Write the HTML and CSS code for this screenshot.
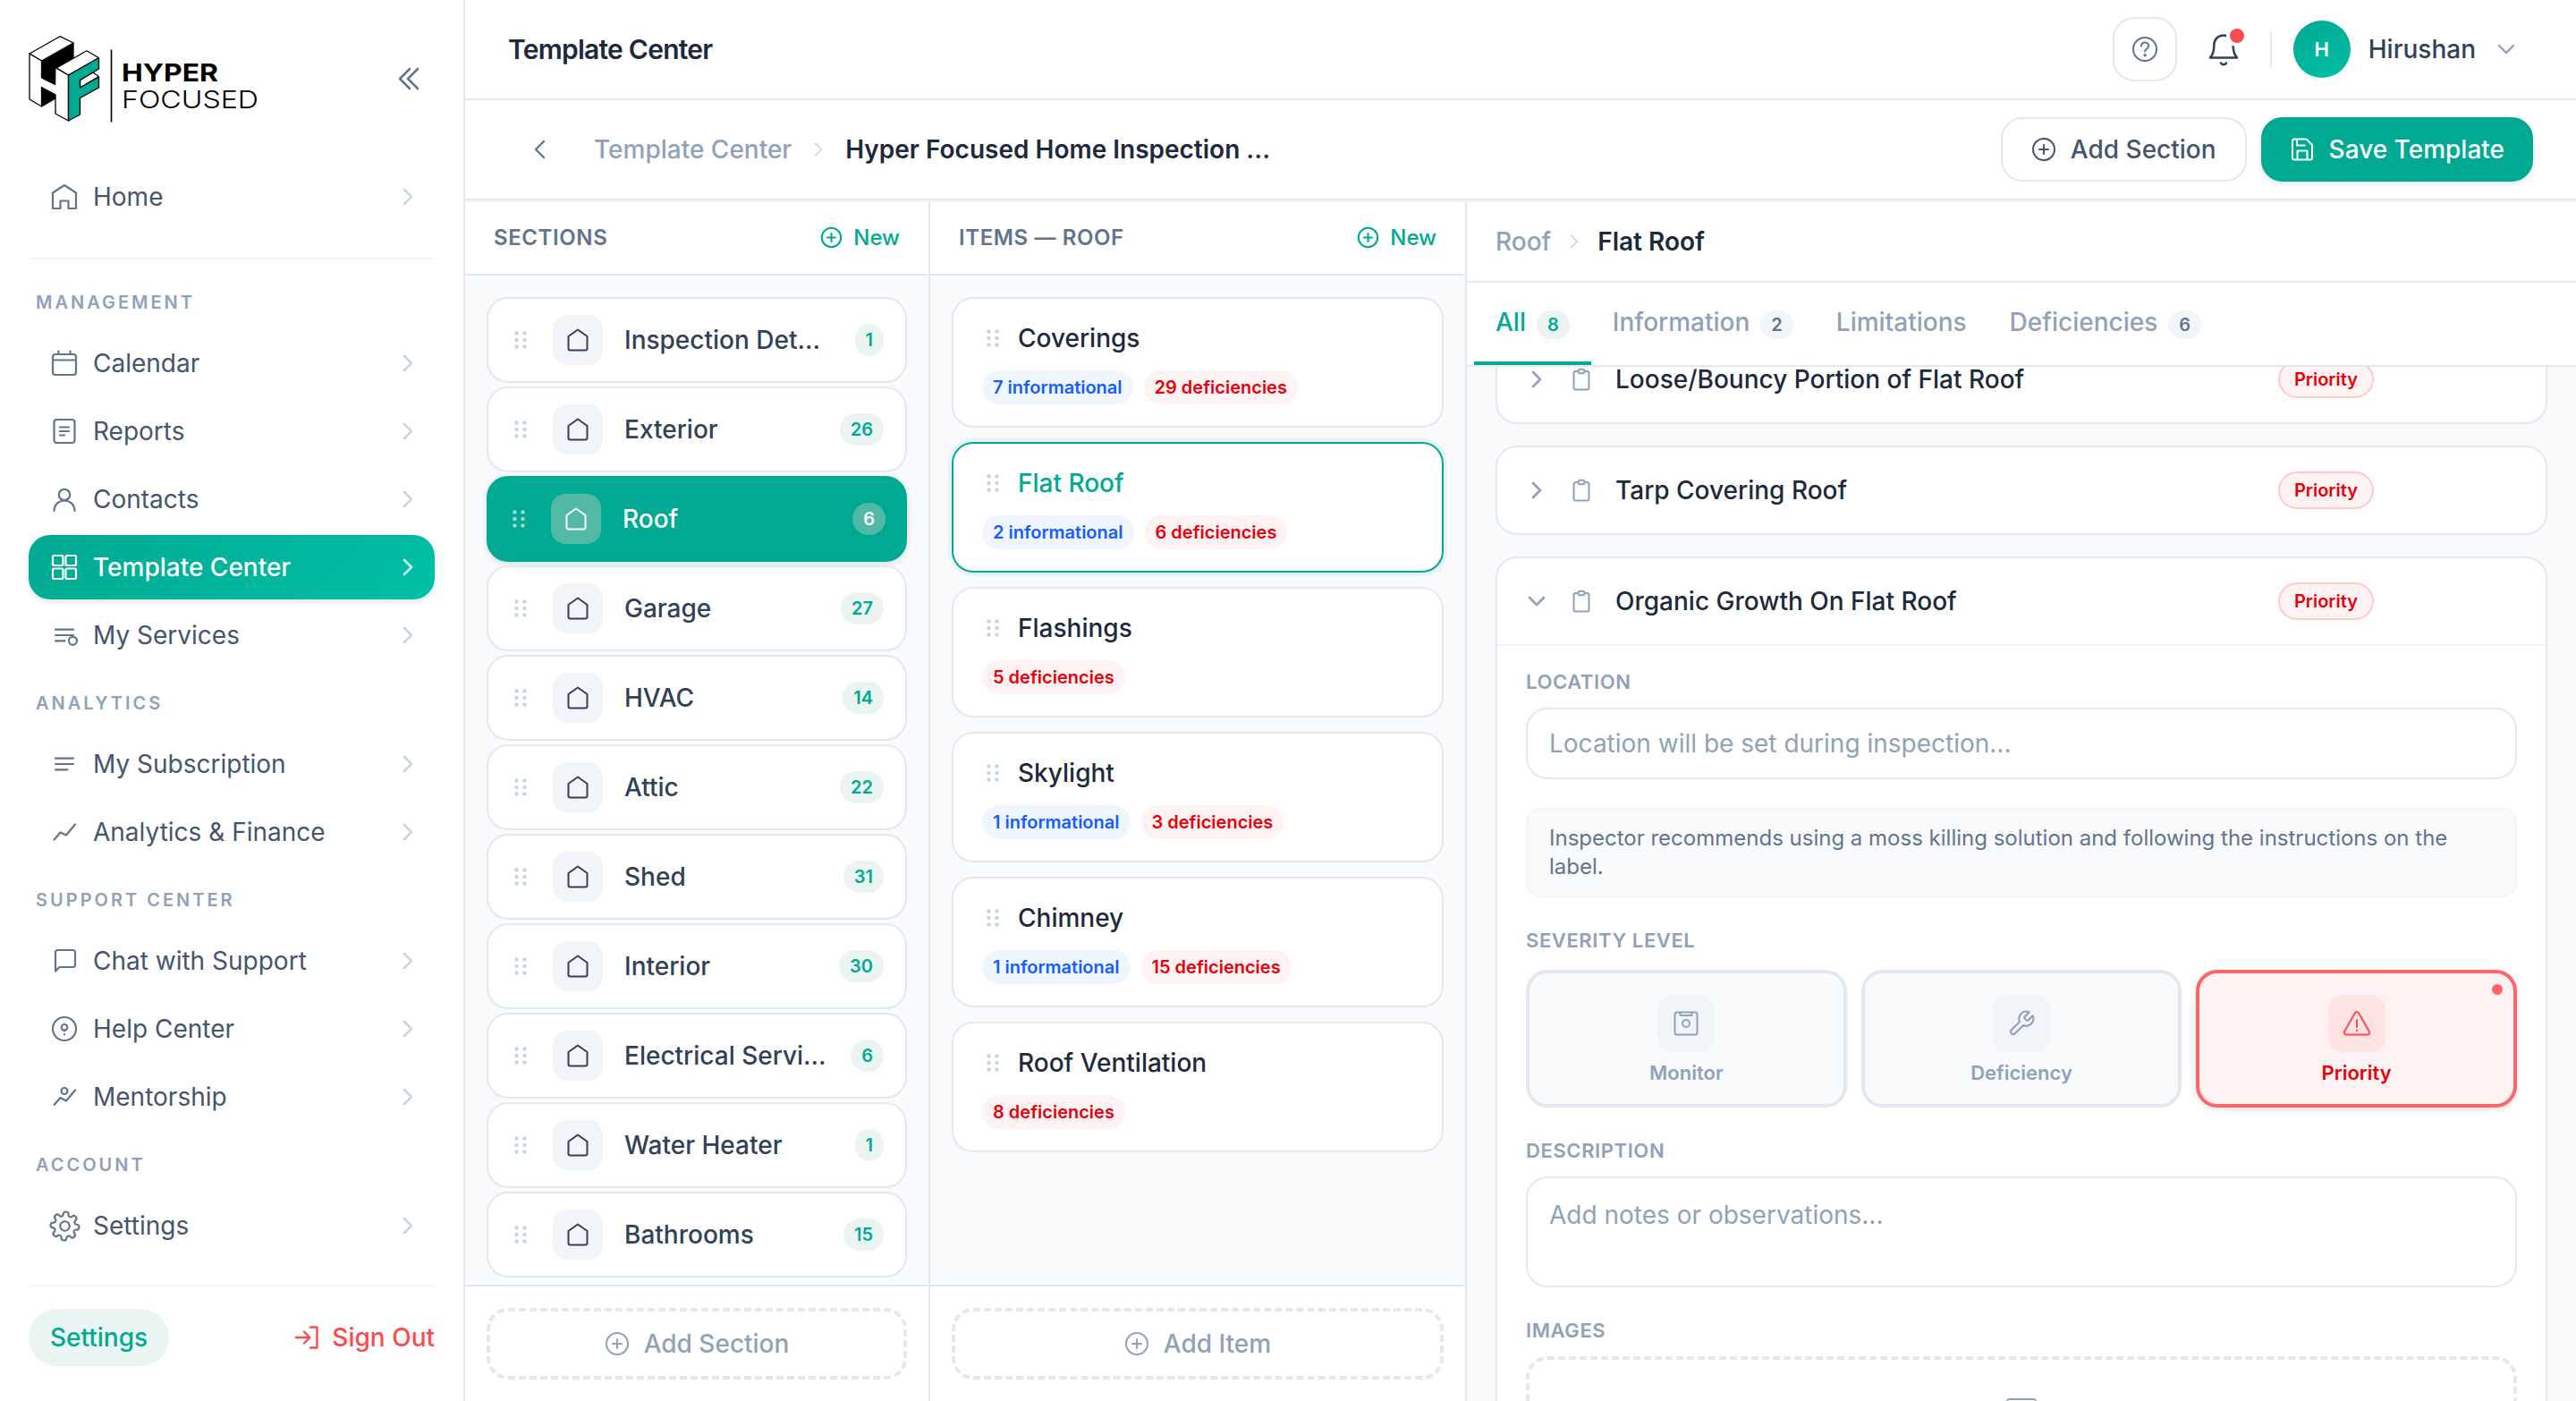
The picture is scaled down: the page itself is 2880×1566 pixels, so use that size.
FILE: index.html
```html
<!DOCTYPE html>
<html lang="en">
<head>
    <meta charset="UTF-8">
    <meta name="viewport" content="width=device-width, initial-scale=1.0">
    <title>Template Center</title>
    <link rel="stylesheet" href="styles.css">
</head>
<body>
    <!-- Icon sprite -->
    <svg class="sprite">
        <symbol id="i-right" viewBox="0 0 24 24"><path d="M8 4l8 8-8 8"/></symbol>
        <symbol id="i-down" viewBox="0 0 24 24"><path d="M4 8l8 8 8-8"/></symbol>
        <symbol id="i-left" viewBox="0 0 24 24"><path d="M16 3l-9 9 9 9"/></symbol>
        <symbol id="i-grip" viewBox="0 0 24 24"><g fill="currentColor" stroke="none"><circle cx="7.5" cy="4.5" r="2.3"/><circle cx="16.5" cy="4.5" r="2.3"/><circle cx="7.5" cy="12" r="2.3"/><circle cx="16.5" cy="12" r="2.3"/><circle cx="7.5" cy="19.5" r="2.3"/><circle cx="16.5" cy="19.5" r="2.3"/></g></symbol>
        <symbol id="i-house" viewBox="0 0 28 28"><path d="M14 2.5L3.5 10v13.500a2 2 0 0 0 2 2h17a2 2 0 0 0 2-2V10z"/></symbol>
        <symbol id="i-plus" viewBox="0 0 28 28"><circle cx="14" cy="14" r="12"/><path d="M14 9v10M9 14h10"/></symbol>
        <symbol id="i-clip" viewBox="0 0 24 28"><rect x="3.500" y="5" width="17" height="20.500" rx="2.500"/><rect x="8.500" y="2.800" width="7" height="4.500" rx="2.200" fill="#fff"/></symbol>
        <symbol id="i-home" viewBox="0 0 32 32"><path d="M16 3L3 11.500V29h8.500v-8.500h9V29H29V11.500z"/></symbol>
        <symbol id="i-calendar" viewBox="0 0 32 32"><rect x="3" y="6" width="26" height="23" rx="3"/><path d="M3 12.500h26M9.500 2.500V6M22.500 2.500V6"/></symbol>
        <symbol id="i-report" viewBox="0 0 32 32"><rect x="4.500" y="3" width="23" height="26" rx="3"/><path d="M11 11.500h10M11 16h10M11 20.500h5"/></symbol>
        <symbol id="i-user" viewBox="0 0 32 32"><circle cx="16" cy="11" r="6.200"/><path d="M4.500 29c0-6.500 5-11.500 11.500-11.500S27.500 22.500 27.500 29"/></symbol>
        <symbol id="i-grid" viewBox="0 0 32 32"><rect x="3" y="3" width="11.500" height="11" rx="1.500"/><rect x="17.500" y="3" width="11.500" height="11" rx="1.500"/><rect x="3" y="17.500" width="11.500" height="11.500" rx="1.500"/><rect x="17.500" y="17.500" width="11.500" height="11.500" rx="1.500"/></symbol>
        <symbol id="i-services" viewBox="0 0 32 32"><path d="M6 9.700h20M6 16h20M6 22.300h10.500"/><circle cx="25.500" cy="22.300" r="4.500" fill="#fff"/></symbol>
        <symbol id="i-lines" viewBox="0 0 32 32"><path d="M6 9.700h20M6 16h20M6 22.300h13.500"/></symbol>
        <symbol id="i-trend" viewBox="0 0 32 32"><path d="M4.500 24.500l7-8 6.500 3 10-12"/></symbol>
        <symbol id="i-chat" viewBox="0 0 32 32"><path d="M6 27.500V6.500a2.500 2.500 0 0 1 2.500-2.500h17a2.500 2.500 0 0 1 2.500 2.500v14a2.500 2.500 0 0 1-2.500 2.500H10.500z"/></symbol>
        <symbol id="i-help" viewBox="0 0 32 32"><circle cx="16" cy="16" r="13"/><circle cx="16" cy="14.300" r="3.300"/><path d="M16 17.500v1M16 22v.3"/></symbol>
        <symbol id="i-mentor" viewBox="0 0 32 32"><path d="M4.500 25l7-8 6.500 3.500 10-12"/><circle cx="16" cy="9.500" r="3.500"/></symbol>
        <symbol id="i-gear" viewBox="0 0 24 24"><circle cx="12" cy="12" r="3.600"/><path d="M19.400 15a1.650 1.650 0 0 0 .33 1.820l.06.06a2 2 0 0 1-2.830 2.830l-.06-.06a1.650 1.650 0 0 0-1.820-.33 1.650 1.650 0 0 0-1 1.510V21a2 2 0 0 1-4 0v-.09A1.650 1.650 0 0 0 9 19.400a1.650 1.650 0 0 0-1.820.33l-.06.06a2 2 0 0 1-2.830-2.830l.06-.06a1.650 1.650 0 0 0 .33-1.820 1.650 1.650 0 0 0-1.510-1H3a2 2 0 0 1 0-4h.09A1.650 1.650 0 0 0 4.600 9a1.650 1.650 0 0 0-.33-1.820l-.06-.06a2 2 0 0 1 2.830-2.830l.06.06a1.650 1.650 0 0 0 1.820.33H9a1.650 1.650 0 0 0 1-1.510V3a2 2 0 0 1 4 0v.09a1.650 1.650 0 0 0 1 1.510 1.650 1.650 0 0 0 1.820-.33l.06-.06a2 2 0 0 1 2.830 2.830l-.06.06a1.650 1.650 0 0 0-.33 1.820V9a1.650 1.650 0 0 0 1.510 1H21a2 2 0 0 1 0 4h-.09a1.650 1.650 0 0 0-1.510 1z"/></symbol>
    </svg>

    <div class="app">
        <aside class="sidebar">
            <div class="brand">
                <svg class="logo" viewBox="32 40 256 96">
                    <g fill="#fff" stroke="#000" stroke-width="1.300" stroke-linejoin="round">
                        <path fill="#000" d="M46.500 68L82 48v16L63 76v19l-16.500-8z"/>
                        <path fill="#000" d="M46.500 97L62 106v4l-15.500 9z"/>
                        <path d="M33 60l34-19.300L82 48 46.500 68z"/>
                        <path d="M33 60l13.500 8v19L62 95.500V106l-15.500-9v22L33 111z"/>
                        <path stroke="none" d="M45.800 87.500L63.500 96v9.500L45.800 96.500z"/>
                        <path d="M63 76l34-19.300 13.500 8L76.500 84z"/>
                        <path d="M62.500 76l14 8v51L62 127v-21"/>
                        <path stroke="none" d="M60 95.500l4 2v8l-4-2z"/>
                        <path d="M104 81l6.500 4.500-21 12.500v-8.500z"/>
                        <path fill="#00a991" d="M76.500 84l34-19.500V77l-21 12.500V98l21-12v12l-21 11.500V128l-13 7z"/>
                    </g>
                    <path d="M124.500 56v80" stroke="#000" stroke-width="1.600"/>
                    <text class="logo-bold" x="136" y="91" textLength="108" lengthAdjust="spacingAndGlyphs">HYPER</text>
                    <text class="logo-thin" x="136" y="121" textLength="153" lengthAdjust="spacingAndGlyphs">FOCUSED</text>
                </svg>
                <svg class="ic collapse" viewBox="0 0 24 26"><path d="M13 2L2 13l11 11M22 2L11 13l11 11"/></svg>
            </div>

            <nav class="nav">
                <a class="nav-item"><svg class="ic"><use href="#i-home"/></svg><span>Home</span><svg class="chev"><use href="#i-right"/></svg></a>
                <hr class="nav-line">
                <h4 class="nav-title">Management</h4>
                <a class="nav-item"><svg class="ic"><use href="#i-calendar"/></svg><span>Calendar</span><svg class="chev"><use href="#i-right"/></svg></a>
                <a class="nav-item"><svg class="ic"><use href="#i-report"/></svg><span>Reports</span><svg class="chev"><use href="#i-right"/></svg></a>
                <a class="nav-item"><svg class="ic"><use href="#i-user"/></svg><span>Contacts</span><svg class="chev"><use href="#i-right"/></svg></a>
                <a class="nav-item active"><svg class="ic"><use href="#i-grid"/></svg><span>Template Center</span><svg class="chev"><use href="#i-right"/></svg></a>
                <a class="nav-item"><svg class="ic"><use href="#i-services"/></svg><span>My Services</span><svg class="chev"><use href="#i-right"/></svg></a>
                <h4 class="nav-title">Analytics</h4>
                <a class="nav-item"><svg class="ic"><use href="#i-lines"/></svg><span>My Subscription</span><svg class="chev"><use href="#i-right"/></svg></a>
                <a class="nav-item"><svg class="ic"><use href="#i-trend"/></svg><span>Analytics &amp; Finance</span><svg class="chev"><use href="#i-right"/></svg></a>
                <h4 class="nav-title">Support Center</h4>
                <a class="nav-item"><svg class="ic"><use href="#i-chat"/></svg><span>Chat with Support</span><svg class="chev"><use href="#i-right"/></svg></a>
                <a class="nav-item"><svg class="ic"><use href="#i-help"/></svg><span>Help Center</span><svg class="chev"><use href="#i-right"/></svg></a>
                <a class="nav-item"><svg class="ic"><use href="#i-mentor"/></svg><span>Mentorship</span><svg class="chev"><use href="#i-right"/></svg></a>
                <h4 class="nav-title">Account</h4>
                <a class="nav-item"><svg class="ic gear"><use href="#i-gear"/></svg><span>Settings</span><svg class="chev"><use href="#i-right"/></svg></a>
            </nav>

            <div class="side-footer">
                <a class="pill-link">Settings</a>
                <a class="sign-out"><svg class="ic" viewBox="0 0 28 28"><path d="M2 14h15M11 7.500l6.500 6.500-6.500 6.500M18 2.500h7.500v23H18"/></svg>Sign Out</a>
            </div>
        </aside>

        <div class="main">
            <header class="topbar">
                <h1>Template Center</h1>
                <div class="top-actions">
                    <button class="help-btn"><svg class="ic" viewBox="0 0 32 32"><circle cx="16" cy="16" r="13"/><path d="M11.800 12.500c.3-2.500 2-4 4.300-4s4.200 1.500 4.200 3.700c0 3.300-4.200 3.200-4.200 6.300"/><circle cx="16.100" cy="22.800" r="1.700" fill="currentColor" stroke="none"/></svg></button>
                    <div class="bell">
                        <svg class="ic" viewBox="0 0 36 40"><path d="M3 29.500c2.800-3 4.300-6.500 4.300-13.500C7.300 9 11.500 4.500 18 4.500S28.700 9 28.700 16c0 7 1.500 10.500 4.300 13.500zM15 35.500c1.500 2.300 4.500 2.300 6 0"/></svg>
                        <span class="bell-dot"></span>
                    </div>
                    <div class="user">
                        <span class="avatar">H</span>
                        <span class="user-name">Hirushan</span>
                        <svg class="ic user-chev"><use href="#i-down"/></svg>
                    </div>
                </div>
            </header>

            <div class="subbar">
                <svg class="ic back"><use href="#i-left"/></svg>
                <span class="crumb">Template Center</span>
                <svg class="ic crumb-sep"><use href="#i-right"/></svg>
                <span class="crumb-current">Hyper Focused Home Inspection ...</span>
                <div class="sub-actions">
                    <button class="btn"><svg class="ic"><use href="#i-plus"/></svg>Add Section</button>
                    <button class="btn btn-primary"><svg class="ic" viewBox="0 0 28 28"><path d="M5 2.500h13.500l6.500 6.500v14.500a2 2 0 0 1-2 2H5a2 2 0 0 1-2-2v-19a2 2 0 0 1 2-2zM8 3v6.500h9M8.500 25v-9.500h11V25"/></svg>Save Template</button>
                </div>
            </div>

            <div class="columns">
                <section class="col col-sections">
                    <div class="col-head"><h2>SECTIONS</h2><a class="new"><svg class="ic"><use href="#i-plus"/></svg>New</a></div>
                    <div class="col-list section-list">
                        <div class="section"><svg class="grip"><use href="#i-grip"/></svg><span class="house"><svg class="ic"><use href="#i-house"/></svg></span><span class="name">Inspection Det…</span><span class="count">1</span></div>
                        <div class="section"><svg class="grip"><use href="#i-grip"/></svg><span class="house"><svg class="ic"><use href="#i-house"/></svg></span><span class="name">Exterior</span><span class="count">26</span></div>
                        <div class="section active"><svg class="grip"><use href="#i-grip"/></svg><span class="house"><svg class="ic"><use href="#i-house"/></svg></span><span class="name">Roof</span><span class="count">6</span></div>
                        <div class="section"><svg class="grip"><use href="#i-grip"/></svg><span class="house"><svg class="ic"><use href="#i-house"/></svg></span><span class="name">Garage</span><span class="count">27</span></div>
                        <div class="section"><svg class="grip"><use href="#i-grip"/></svg><span class="house"><svg class="ic"><use href="#i-house"/></svg></span><span class="name">HVAC</span><span class="count">14</span></div>
                        <div class="section"><svg class="grip"><use href="#i-grip"/></svg><span class="house"><svg class="ic"><use href="#i-house"/></svg></span><span class="name">Attic</span><span class="count">22</span></div>
                        <div class="section"><svg class="grip"><use href="#i-grip"/></svg><span class="house"><svg class="ic"><use href="#i-house"/></svg></span><span class="name">Shed</span><span class="count">31</span></div>
                        <div class="section"><svg class="grip"><use href="#i-grip"/></svg><span class="house"><svg class="ic"><use href="#i-house"/></svg></span><span class="name">Interior</span><span class="count">30</span></div>
                        <div class="section"><svg class="grip"><use href="#i-grip"/></svg><span class="house"><svg class="ic"><use href="#i-house"/></svg></span><span class="name">Electrical Servi…</span><span class="count">6</span></div>
                        <div class="section"><svg class="grip"><use href="#i-grip"/></svg><span class="house"><svg class="ic"><use href="#i-house"/></svg></span><span class="name">Water Heater</span><span class="count">1</span></div>
                        <div class="section"><svg class="grip"><use href="#i-grip"/></svg><span class="house"><svg class="ic"><use href="#i-house"/></svg></span><span class="name">Bathrooms</span><span class="count">15</span></div>
                    </div>
                    <div class="col-foot"><button class="add"><svg class="ic"><use href="#i-plus"/></svg>Add Section</button></div>
                </section>

                <section class="col col-items">
                    <div class="col-head"><h2>ITEMS — ROOF</h2><a class="new"><svg class="ic"><use href="#i-plus"/></svg>New</a></div>
                    <div class="col-list item-list">
                        <div class="item">
                            <div class="item-title"><svg class="grip"><use href="#i-grip"/></svg>Coverings</div>
                            <div class="tags"><span class="tag info">7 informational</span><span class="tag def">29 deficiencies</span></div>
                        </div>
                        <div class="item active">
                            <div class="item-title"><svg class="grip"><use href="#i-grip"/></svg>Flat Roof</div>
                            <div class="tags"><span class="tag info">2 informational</span><span class="tag def">6 deficiencies</span></div>
                        </div>
                        <div class="item">
                            <div class="item-title"><svg class="grip"><use href="#i-grip"/></svg>Flashings</div>
                            <div class="tags"><span class="tag def">5 deficiencies</span></div>
                        </div>
                        <div class="item">
                            <div class="item-title"><svg class="grip"><use href="#i-grip"/></svg>Skylight</div>
                            <div class="tags"><span class="tag info">1 informational</span><span class="tag def">3 deficiencies</span></div>
                        </div>
                        <div class="item">
                            <div class="item-title"><svg class="grip"><use href="#i-grip"/></svg>Chimney</div>
                            <div class="tags"><span class="tag info">1 informational</span><span class="tag def">15 deficiencies</span></div>
                        </div>
                        <div class="item">
                            <div class="item-title"><svg class="grip"><use href="#i-grip"/></svg>Roof Ventilation</div>
                            <div class="tags"><span class="tag def">8 deficiencies</span></div>
                        </div>
                    </div>
                    <div class="col-foot"><button class="add"><svg class="ic"><use href="#i-plus"/></svg>Add Item</button></div>
                </section>

                <section class="detail">
                    <div class="detail-crumbs"><span>Roof</span><svg class="ic"><use href="#i-right"/></svg><b>Flat Roof</b></div>
                    <div class="tabs">
                        <a class="tab active">All<span class="tab-count">8</span></a>
                        <a class="tab">Information<span class="tab-count">2</span></a>
                        <a class="tab">Limitations</a>
                        <a class="tab">Deficiencies<span class="tab-count">6</span></a>
                    </div>
                    <div class="detail-body">
                        <div class="cards">
                            <div class="card">
                                <div class="card-head"><svg class="ic arrow"><use href="#i-right"/></svg><svg class="ic clip"><use href="#i-clip"/></svg><span class="card-name">Loose/Bouncy Portion of Flat Roof</span><span class="priority">Priority</span></div>
                            </div>
                            <div class="card">
                                <div class="card-head"><svg class="ic arrow"><use href="#i-right"/></svg><svg class="ic clip"><use href="#i-clip"/></svg><span class="card-name">Tarp Covering Roof</span><span class="priority">Priority</span></div>
                            </div>
                            <div class="card open">
                                <div class="card-head"><svg class="ic arrow"><use href="#i-down"/></svg><svg class="ic clip"><use href="#i-clip"/></svg><span class="card-name">Organic Growth On Flat Roof</span><span class="priority">Priority</span></div>
                                <div class="card-body">
                                    <label class="field-label">LOCATION</label>
                                    <input class="field" type="text" placeholder="Location will be set during inspection...">
                                    <p class="note">Inspector recommends using a moss killing solution and following the instructions on the label.</p>
                                    <label class="field-label severity-label">SEVERITY LEVEL</label>
                                    <div class="severity">
                                        <div class="level">
                                            <span class="level-icon"><svg class="ic" viewBox="0 0 32 32"><rect x="3.500" y="3.500" width="25" height="25" rx="2.500"/><path d="M9.500 4v3h13V4"/><circle cx="16" cy="16" r="4"/></svg></span>
                                            Monitor
                                        </div>
                                        <div class="level">
                                            <span class="level-icon"><svg class="ic" viewBox="0 0 24 24"><path stroke-width="1.600" d="M14.700 6.300a1 1 0 0 0 0 1.400l1.600 1.600a1 1 0 0 0 1.400 0l3.770-3.770a6 6 0 0 1-7.940 7.940l-6.910 6.910a2.120 2.120 0 0 1-3-3l6.910-6.910a6 6 0 0 1 7.940-7.940l-3.760 3.760z"/></svg></span>
                                            Deficiency
                                        </div>
                                        <div class="level selected">
                                            <span class="level-icon"><svg class="ic" viewBox="0 0 32 32"><path d="M14 4.200a2.300 2.300 0 0 1 4 0l12 21a2.300 2.300 0 0 1-2 3.300H4a2.300 2.300 0 0 1-2-3.300zM16 12v8M16 23.500v.7"/></svg></span>
                                            Priority
                                            <i class="level-dot"></i>
                                        </div>
                                    </div>
                                    <label class="field-label">DESCRIPTION</label>
                                    <textarea class="field area" placeholder="Add notes or observations..."></textarea>
                                    <label class="field-label">IMAGES</label>
                                    <div class="drop"><svg class="ic" viewBox="0 0 40 40"><rect x="4" y="4" width="32" height="32" rx="3"/></svg></div>
                                </div>
                            </div>
                        </div>
                    </div>
                </section>
            </div>
        </div>
    </div>
</body>
</html>
```
FILE: styles.css
```css
* {
    box-sizing: border-box;
}
body {
    margin: 0;
    font-family: Inter, "Liberation Sans", sans-serif;
    font-size: 28px;
    font-weight: 500;
    color: #314158;
    background-color: #fff;
}
h1, h2, h4, p {
    margin: 0;
}
button, input, textarea {
    font: inherit;
}
.sprite {
    display: none;
}
svg {
    flex: none;
    fill: none;
    stroke: currentColor;
    stroke-width: 2;
    stroke-linecap: round;
    stroke-linejoin: round;
}
.ic {
    display: block;
    width: 28px;
    height: 28px;
}
.app {
    display: flex;
    width: 2880px;
    height: 1566px;
    overflow: hidden;
}

/* Sidebar */
.sidebar {
    display: flex;
    flex-direction: column;
    flex: none;
    width: 520px;
    padding: 0 32px;
    border-right: 2px solid #e2e8f0;
}
.brand {
    display: flex;
    justify-content: space-between;
    align-items: center;
    height: 184px;
    padding: 0 17px 8px 0;
}
.logo {
    width: 256px;
    height: 96px;
    overflow: visible;
}
.logo text {
    fill: #000;
    stroke: none;
    font-size: 27.500px;
}
.logo-bold {
    font-weight: 700;
}
.logo-thin {
    font-weight: 300;
}
.collapse {
    width: 24px;
    height: 26px;
    color: #62748e;
    stroke-width: 2.600;
}
.nav {
    flex: 1;
}
.nav-item {
    display: flex;
    align-items: center;
    gap: 16px;
    height: 72px;
    margin-bottom: 4px;
    padding: 0 18px 0 24px;
    border-radius: 24px;
    font-weight: 400;
    color: #45556c;
}
.nav-item .ic {
    width: 32px;
    height: 32px;
    stroke-width: 2.200;
    color: #62748e;
}
.nav-item .gear {
    width: 35px;
    height: 35px;
    margin: 0 -1.500px;
    stroke-width: 1.500;
    transform: rotate(5deg);
}
.nav-item span {
    flex: 1;
}
.chev {
    width: 24px;
    height: 24px;
    stroke-width: 2.600;
    color: #cad5e2;
}
.nav-item.active {
    font-weight: 500;
    color: #fff;
    background: linear-gradient(135deg, #00a991, #00bfa5);
    box-shadow: 0 2px 6px rgba(0, 60, 80, 0.15);
}
.nav-item.active .ic {
    color: #fff;
}
.nav-item.active .chev {
    color: rgba(255, 255, 255, 0.8);
}
.nav-line {
    height: 2px;
    margin: 32px 0 8px;
    border: 0;
    background-color: #f1f5f9;
}
.nav-title {
    margin-top: -4px;
    padding: 28px 8px 20px;
    font-size: 20px;
    font-weight: 600;
    line-height: 24px;
    letter-spacing: 3px;
    text-transform: uppercase;
    color: #90a1b9;
}
.nav-line + .nav-title {
    margin-top: 0;
}
.side-footer {
    display: flex;
    justify-content: space-between;
    align-items: center;
    height: 130px;
    padding-bottom: 14px;
    border-top: 2px solid #f1f5f9;
}
.pill-link {
    height: 64px;
    padding: 0 24px;
    border-radius: 32px;
    line-height: 64px;
    color: #00a991;
    background-color: #eaf4f3;
}
.sign-out {
    display: flex;
    align-items: center;
    gap: 14px;
    color: #fb4b4e;
}
.sign-out .ic {
    stroke-width: 2.400;
}

/* Top bars */
.main {
    display: flex;
    flex-direction: column;
    flex: 1;
    min-width: 0;
}
.topbar {
    display: flex;
    justify-content: space-between;
    align-items: center;
    height: 112px;
    padding: 0 66px 0 48px;
    border-bottom: 2px solid #e2e8f0;
}
h1 {
    font-size: 30px;
    font-weight: 600;
    letter-spacing: -0.750px;
    color: #1d293d;
}
.top-actions {
    display: flex;
    align-items: center;
}
.help-btn {
    display: flex;
    align-items: center;
    justify-content: center;
    width: 72px;
    height: 72px;
    padding: 0;
    border: 2px solid #e2e8f0;
    border-radius: 24px;
    color: #62748e;
    background-color: #fff;
}
.help-btn .ic {
    width: 32px;
    height: 32px;
}
.bell {
    position: relative;
    margin: 0 34px;
}
.bell .ic {
    width: 36px;
    height: 40px;
    stroke-width: 2.600;
}
.bell-dot {
    position: absolute;
    top: -7px;
    right: -9px;
    width: 24px;
    height: 24px;
    border: 4px solid #fff;
    border-radius: 50%;
    background-color: #fb4b4e;
}
.user {
    display: flex;
    align-items: center;
    height: 40px;
    padding-left: 24px;
    border-left: 2px solid #e2e8f0;
}
.avatar {
    width: 64px;
    height: 64px;
    margin-right: 20px;
    border-radius: 50%;
    font-size: 22px;
    font-weight: 600;
    line-height: 64px;
    text-align: center;
    color: #fff;
    background: linear-gradient(160deg, #00a991, #00bfa5);
}
.user-chev {
    width: 24px;
    height: 24px;
    margin-left: 22px;
    stroke-width: 2.400;
    color: #90a1b9;
}
.subbar {
    position: relative;
    z-index: 1;
    display: flex;
    align-items: center;
    height: 112px;
    padding: 0 48px 0 72px;
    border-bottom: 2px solid #e2e8f0;
    box-shadow: 0 2px 0 #f1f5f9;
}
.back {
    width: 24px;
    height: 24px;
    stroke-width: 2.400;
    color: #62748e;
}
.crumb {
    margin-left: 48px;
    color: #90a1b9;
}
.crumb-sep {
    width: 20px;
    height: 20px;
    margin: 0 20px;
    color: #cad5e2;
}
.crumb-current {
    font-weight: 600;
    color: #1d293d;
}
.sub-actions {
    display: flex;
    gap: 16px;
    margin-left: auto;
}
.btn {
    display: flex;
    align-items: center;
    gap: 16px;
    height: 72px;
    padding: 0 32px;
    border: 2px solid #e2e8f0;
    border-radius: 24px;
    color: #45556c;
    background-color: #fff;
}
.btn-primary {
    padding: 0 30px;
    border-color: #00a991;
    color: #fff;
    background-color: #00a991;
    box-shadow: 0 2px 6px rgba(0, 60, 80, 0.15);
}

/* Section and item columns */
.columns {
    display: flex;
    flex: 1;
    min-height: 0;
}
.col {
    display: flex;
    flex-direction: column;
    flex: none;
    border-right: 2px solid #e2e8f0;
}
.col-sections {
    width: 520px;
}
.col-items {
    width: 600px;
}
.col-head {
    display: flex;
    justify-content: space-between;
    align-items: center;
    height: 84px;
    padding: 0 32px;
    border-bottom: 2px solid #e2e8f0;
}
h2 {
    font-size: 24px;
    font-weight: 600;
    letter-spacing: 0.600px;
    color: #62748e;
}
.new {
    display: flex;
    align-items: center;
    gap: 12px;
    font-size: 24px;
    color: #00a991;
}
.new .ic {
    width: 25px;
    height: 25px;
    stroke-width: 2.300;
}
.col-list {
    display: flex;
    flex-direction: column;
    flex: 1;
    min-height: 0;
    padding: 24px;
    background-color: #f8fafc;
}
.section-list {
    gap: 4px;
}
.section {
    display: flex;
    align-items: center;
    flex: none;
    gap: 24px;
    height: 96px;
    padding: 0 24px;
    border: 2px solid #e2e8f0;
    border-radius: 24px;
    background-color: #fff;
}
.grip {
    width: 24px;
    height: 24px;
    color: #cad5e2;
}
.house {
    display: flex;
    align-items: center;
    justify-content: center;
    width: 56px;
    height: 56px;
    border-radius: 16px;
    background-color: #f1f5f9;
}
.name {
    flex: 1;
    white-space: nowrap;
}
.count {
    height: 36px;
    padding: 0 12px;
    border-radius: 18px;
    font-size: 20px;
    font-weight: 600;
    line-height: 36px;
    color: #00a991;
    background-color: #eaf4f3;
}
.section.active {
    border: 0;
    color: #fff;
    background-color: #00a991;
    box-shadow: 0 2px 6px rgba(0, 60, 80, 0.15);
}
.section.active .grip {
    color: #99dcd2;
}
.section.active .house, .section.active .count {
    color: #fff;
    background-color: #53b9a7;
}
.col-foot {
    height: 130px;
    padding: 24px;
    border-top: 2px solid #e2e8f0;
}
.add {
    display: flex;
    align-items: center;
    justify-content: center;
    gap: 16px;
    width: 100%;
    height: 80px;
    border: 4px dashed #e2e8f0;
    border-radius: 24px;
    color: #90a1b9;
    background-color: #fff;
}
.item-list {
    gap: 16px;
}
.item {
    height: 146px;
    padding: 24px 32px;
    border: 2px solid #e2e8f0;
    border-radius: 24px;
    color: #1d293d;
    background-color: #fff;
}
.item.active {
    border-color: #00a991;
    box-shadow: 0 0 0 4px rgba(0, 169, 145, 0.08);
}
.item.active .item-title {
    color: #00a991;
}
.item-title {
    display: flex;
    align-items: center;
    gap: 16px;
    height: 40px;
}
.tags {
    display: flex;
    gap: 12px;
    margin-top: 16px;
}
.tag {
    height: 38px;
    padding: 0 12px;
    border-radius: 19px;
    font-size: 20px;
    font-weight: 600;
    line-height: 38px;
}
.info {
    color: #155dfc;
    background-color: #eff6ff;
}
.def {
    color: #e7000b;
    background-color: #fef2f2;
}

/* Detail panel */
.detail {
    display: flex;
    flex-direction: column;
    flex: 1;
    min-width: 0;
}
.detail-crumbs {
    display: flex;
    align-items: center;
    height: 92px;
    padding: 2px 0 0 32px;
    border-bottom: 2px solid #e2e8f0;
    color: #90a1b9;
}
.detail-crumbs .ic {
    width: 20px;
    height: 20px;
    margin: 0 16px;
    color: #cad5e2;
}
.detail-crumbs b {
    font-weight: 600;
    color: #1d293d;
}
.tabs {
    display: flex;
    height: 94px;
    padding-left: 8px;
    border-bottom: 2px solid #e2e8f0;
}
.tab {
    display: flex;
    align-items: center;
    padding: 0 24px;
    border-bottom: 4px solid transparent;
    color: #90a1b9;
}
.tab-count {
    height: 32px;
    margin: 6px 0 0 12px;
    padding: 0 12px;
    border-radius: 16px;
    font-size: 20px;
    font-weight: 600;
    line-height: 32px;
    color: #62748e;
    background-color: #f1f5f9;
}
.tab.active {
    border-color: #00a991;
    color: #00a991;
}
.tab.active .tab-count {
    color: #00a991;
    background-color: #eaf4f3;
}
.detail-body {
    flex: 1;
    min-height: 0;
    overflow: hidden;
    padding: 0 32px;
    background-color: #f8fafc;
}
/* list is scrolled down a little */
.cards {
    display: flex;
    flex-direction: column;
    gap: 24px;
    margin-top: -36px;
}
.card {
    border: 2px solid #e2e8f0;
    border-radius: 24px;
    background-color: #fff;
}
.card-head {
    display: flex;
    align-items: center;
    height: 96px;
    padding: 0 192px 0 32px;
    color: #1d293d;
}
.card-head .ic {
    color: #90a1b9;
}
.arrow {
    width: 24px;
    height: 24px;
    stroke-width: 2.600;
}
.clip {
    width: 24px;
    height: 28px;
    margin: 0 26px;
}
.card-name {
    flex: 1;
}
.priority {
    height: 42px;
    padding: 0 16px;
    border: 2px solid #ffc9c9;
    border-radius: 21px;
    font-size: 20px;
    font-weight: 600;
    line-height: 38px;
    color: #e7000b;
    background-color: #fef2f2;
}
.card-body {
    padding: 26px 32px;
    border-top: 2px solid #f1f5f9;
}
.field-label {
    display: block;
    margin: 34px 0 15px;
    font-size: 22px;
    font-weight: 600;
    line-height: 28px;
    letter-spacing: 0.600px;
    color: #90a1b9;
}
.field-label:first-child {
    margin-top: 0;
}
.severity-label {
    margin-bottom: 19px;
}
.field {
    display: block;
    width: 100%;
    height: 80px;
    padding: 0 24px;
    border: 2px solid #e2e8f0;
    border-radius: 24px;
    outline: none;
    font-weight: 400;
    background-color: #fff;
}
.field::placeholder {
    color: #90a1b9;
    opacity: 1;
}
.area {
    height: 124px;
    padding-top: 21px;
    line-height: 40px;
    resize: none;
}
.note {
    margin-top: 32px;
    padding: 16px 24px;
    border: 2px solid #f1f5f9;
    border-radius: 16px;
    font-size: 24px;
    font-weight: 400;
    line-height: 32px;
    color: #62748e;
    background-color: #f8fafc;
}
.severity {
    display: flex;
    gap: 16px;
}
.level {
    position: relative;
    display: flex;
    flex-direction: column;
    align-items: center;
    flex: 1;
    height: 154px;
    padding-top: 24px;
    border: 4px solid #e2e8f0;
    border-radius: 24px;
    font-size: 22px;
    font-weight: 600;
    line-height: 30px;
    color: #90a1b9;
    background-color: #f8fafc;
}
.level-icon {
    display: flex;
    align-items: center;
    justify-content: center;
    width: 64px;
    height: 64px;
    margin-bottom: 8px;
    border-radius: 16px;
    background-color: #f1f5f9;
}
.level-icon .ic {
    width: 32px;
    height: 32px;
}
.level.selected {
    border-color: #ff6467;
    color: #e7000b;
    background-color: #fef2f2;
    box-shadow: 0 2px 6px rgba(0, 0, 0, 0.12);
}
.selected .level-icon {
    color: #fb4b4e;
    background-color: #ffe2e2;
}
.level-dot {
    position: absolute;
    top: 12px;
    right: 12px;
    width: 12px;
    height: 12px;
    border-radius: 50%;
    background-color: #ff6467;
}
.drop {
    display: flex;
    justify-content: center;
    height: 240px;
    padding-top: 40px;
    border: 4px dashed #e2e8f0;
    border-radius: 24px;
    color: #90a1b9;
}
.drop .ic {
    width: 40px;
    height: 40px;
}
```
